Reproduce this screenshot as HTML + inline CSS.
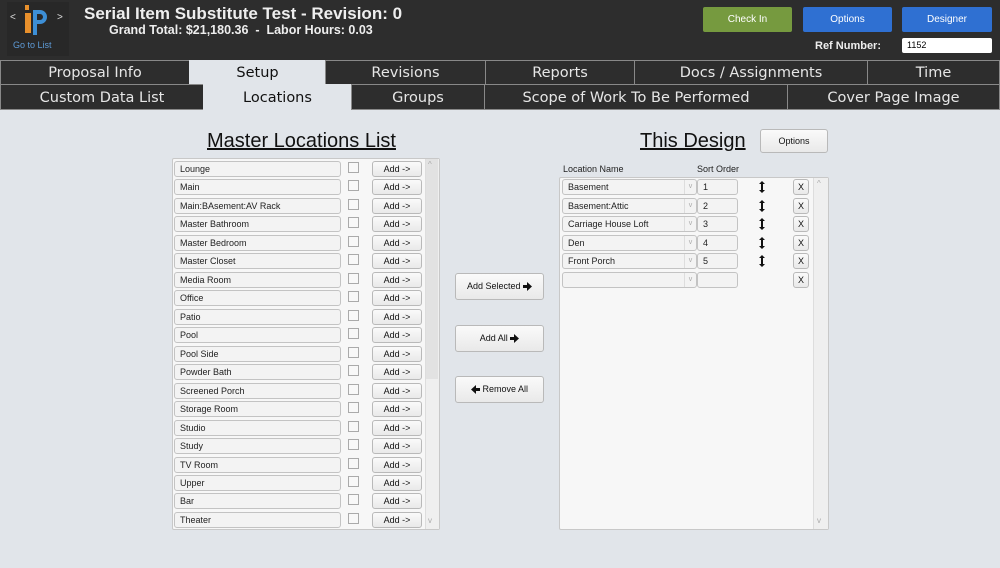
<!DOCTYPE html><html><head><style>
*{box-sizing:border-box;margin:0;padding:0}
body{width:1000px;height:568px;background:#e1e5ea;font-family:"Liberation Sans",sans-serif;position:relative;overflow:hidden}
.a{position:absolute}
.hdr{left:0;top:0;width:1000px;height:60px;background:#2d2d2d}
.tab{position:absolute;background:#2d2d2d;color:#e6e6e6;font-family:"DejaVu Sans",sans-serif;font-size:14.5px;text-align:center;border:1px solid #888;line-height:24px}
.tab.on{background:#e1e5ea;color:#111;border-color:#e1e5ea}
.btn{position:absolute;background:linear-gradient(#fafafa,#e9e9e9);border:1px solid #b9b9b9;border-radius:3px;font-size:9px;color:#111;text-align:center}
.inp{position:absolute;background:#f3f3f3;border:1px solid #c3c3c3;border-radius:3px;font-size:9px;color:#222;padding-left:5px;line-height:14px}
.cb{position:absolute;width:11px;height:11px;border:1px solid #aaa;background:#f8f8f8}
.hb{position:absolute;color:#fff;font-size:10px;text-align:center;line-height:25px;border-radius:2px}
.ar{display:inline-block;vertical-align:middle}
</style></head><body>
<div class="a hdr"></div>
<div class="a" style="left:7px;top:2px;width:62px;height:54px;background:#282828"></div>
<div class="a" style="left:10px;top:12px;color:#ddd;font-size:10px">&lt;</div>
<div class="a" style="left:57px;top:12px;color:#ddd;font-size:10px">&gt;</div>
<svg class="a" style="left:23px;top:4px" width="28" height="32" viewBox="0 0 28 32"><rect x="2" y="1" width="4" height="5" fill="#e8902c"/><rect x="2" y="9" width="6" height="20" fill="#e8902c"/><path d="M10 6h7a7 7 0 0 1 0 14h-3v11h-4z M14 10v6h3a3 3 0 0 0 0-6z" fill="#3d8fd6" fill-rule="evenodd"/></svg>
<div class="a" style="left:13px;top:40px;color:#5d9ad6;font-size:9px">Go to List</div>
<div class="a" style="left:84px;top:4px;color:#eee;font-size:17px;font-weight:bold">Serial Item Substitute Test - Revision: 0</div>
<div class="a" style="left:109px;top:23px;color:#eee;font-size:12.5px;font-weight:bold">Grand Total: $21,180.36 &nbsp;- &nbsp;Labor Hours: 0.03</div>
<div class="hb" style="left:703px;top:7px;width:89px;background:#769a3f">Check In</div>
<div class="hb" style="left:803px;top:7px;width:89px;background:#2f70d2">Options</div>
<div class="hb" style="left:902px;top:7px;width:90px;background:#2f70d2">Designer</div>
<div class="a" style="left:815px;top:40px;color:#eee;font-size:11px;font-weight:bold">Ref Number:</div>
<div class="a" style="left:902px;top:38px;width:90px;height:15px;background:#fff;border-radius:2px;font-size:9px;padding:2px 5px">1152</div>

<div class="tab" style="left:0;top:60px;width:190px;height:25px">Proposal Info</div>
<div class="tab on" style="left:189px;top:60px;width:137px;height:25px">Setup</div>
<div class="tab" style="left:325px;top:60px;width:161px;height:25px">Revisions</div>
<div class="tab" style="left:485px;top:60px;width:150px;height:25px">Reports</div>
<div class="tab" style="left:634px;top:60px;width:234px;height:25px">Docs / Assignments</div>
<div class="tab" style="left:867px;top:60px;width:133px;height:25px">Time</div>
<div class="tab" style="left:0;top:84px;width:204px;height:26px;line-height:26px">Custom Data List</div>
<div class="tab on" style="left:203px;top:84px;width:149px;height:26px;line-height:26px">Locations</div>
<div class="tab" style="left:351px;top:84px;width:134px;height:26px;line-height:26px">Groups</div>
<div class="tab" style="left:484px;top:84px;width:304px;height:26px;line-height:26px">Scope of Work To Be Performed</div>
<div class="tab" style="left:787px;top:84px;width:213px;height:26px;line-height:26px">Cover Page Image</div>

<div class="a" style="left:207px;top:130px;font-size:20px;text-decoration:underline;color:#111">Master Locations List</div>
<div class="a" style="left:640px;top:130px;font-size:20px;text-decoration:underline;color:#111">This Design</div>
<div class="btn" style="left:760px;top:129px;width:68px;height:24px;line-height:22px">Options</div>

<div class="a" style="left:172px;top:158px;width:268px;height:372px;background:#f7f7f7;border:1px solid #c8c8c8;border-radius:2px"></div>
<div class="a" style="left:425px;top:159px;width:14px;height:370px;background:#efefef;border-left:1px solid #ddd"></div>
<div class="a" style="left:426px;top:159px;width:12px;height:220px;background:#e2e2e2"></div>
<div class="a" style="left:428px;top:160px;font-size:8px;color:#aaa">^</div>
<div class="a" style="left:428px;top:516px;font-size:8px;color:#aaa">v</div>
<div id="L"></div>

<div class="btn" style="left:455px;top:273px;width:89px;height:27px;line-height:25px">Add Selected <svg class="ar" width="9" height="9" viewBox="0 0 9 9"><path d="M0 3h4V0l5 4.5L4 9V6H0z" fill="#111"/></svg></div>
<div class="btn" style="left:455px;top:325px;width:89px;height:27px;line-height:25px">Add All <svg class="ar" width="9" height="9" viewBox="0 0 9 9"><path d="M0 3h4V0l5 4.5L4 9V6H0z" fill="#111"/></svg></div>
<div class="btn" style="left:455px;top:376px;width:89px;height:27px;line-height:25px"><svg class="ar" width="9" height="9" viewBox="0 0 9 9"><path d="M9 3H5V0L0 4.5 5 9V6h4z" fill="#111"/></svg> Remove All</div>

<div class="a" style="left:563px;top:164px;font-size:9px;color:#222">Location Name</div>
<div class="a" style="left:697px;top:164px;font-size:9px;color:#222">Sort Order</div>
<div class="a" style="left:559px;top:177px;width:270px;height:353px;background:#f7f7f7;border:1px solid #c8c8c8;border-radius:2px"></div>
<div class="a" style="left:813px;top:178px;width:15px;height:351px;background:#efefef;border-left:1px solid #ddd"></div>
<div class="a" style="left:817px;top:179px;font-size:8px;color:#aaa">^</div>
<div class="a" style="left:817px;top:516px;font-size:8px;color:#aaa">v</div>
<div id="R"></div>
<script>
var n=["Lounge","Main","Main:BAsement:AV Rack","Master Bathroom","Master Bedroom","Master Closet","Media Room","Office","Patio","Pool","Pool Side","Powder Bath","Screened Porch","Storage Room","Studio","Study","TV Room","Upper","Bar","Theater"],h="";
n.forEach(function(t,i){var y=Math.round(161+i*18.47);
h+='<div class="inp" style="left:174px;top:'+y+'px;width:167px;height:16px">'+t+'</div><div class="cb" style="left:348px;top:'+(y+1)+'px"></div><div class="btn" style="left:372px;top:'+y+'px;width:50px;height:16px;line-height:14px">Add -&gt;</div>';});
document.getElementById("L").innerHTML=h;
var r=["Basement","Basement:Attic","Carriage House Loft","Den","Front Porch",""];h="";
r.forEach(function(t,i){var y=Math.round(179+i*18.5);
h+='<div class="inp" style="left:562px;top:'+y+'px;width:135px;height:16px">'+t+'<span style="position:absolute;right:0;top:0;width:12px;border-left:1px solid #ddd;color:#aaa;font-size:7px;text-align:center">v</span></div><div class="inp" style="left:697px;top:'+y+'px;width:41px;height:16px">'+(t?i+1:"")+'</div>'+(t?'<svg class="a" style="left:759px;top:'+(y+2)+'px" width="6" height="12" viewBox="0 0 6 12"><path d="M3 0L6 3H4V9H6L3 12 0 9H2V3H0z" fill="#111"/></svg>':'')+'<div class="btn" style="left:793px;top:'+y+'px;width:16px;height:16px;line-height:14px">X</div>';});
document.getElementById("R").innerHTML=h;
</script>
</body></html>
